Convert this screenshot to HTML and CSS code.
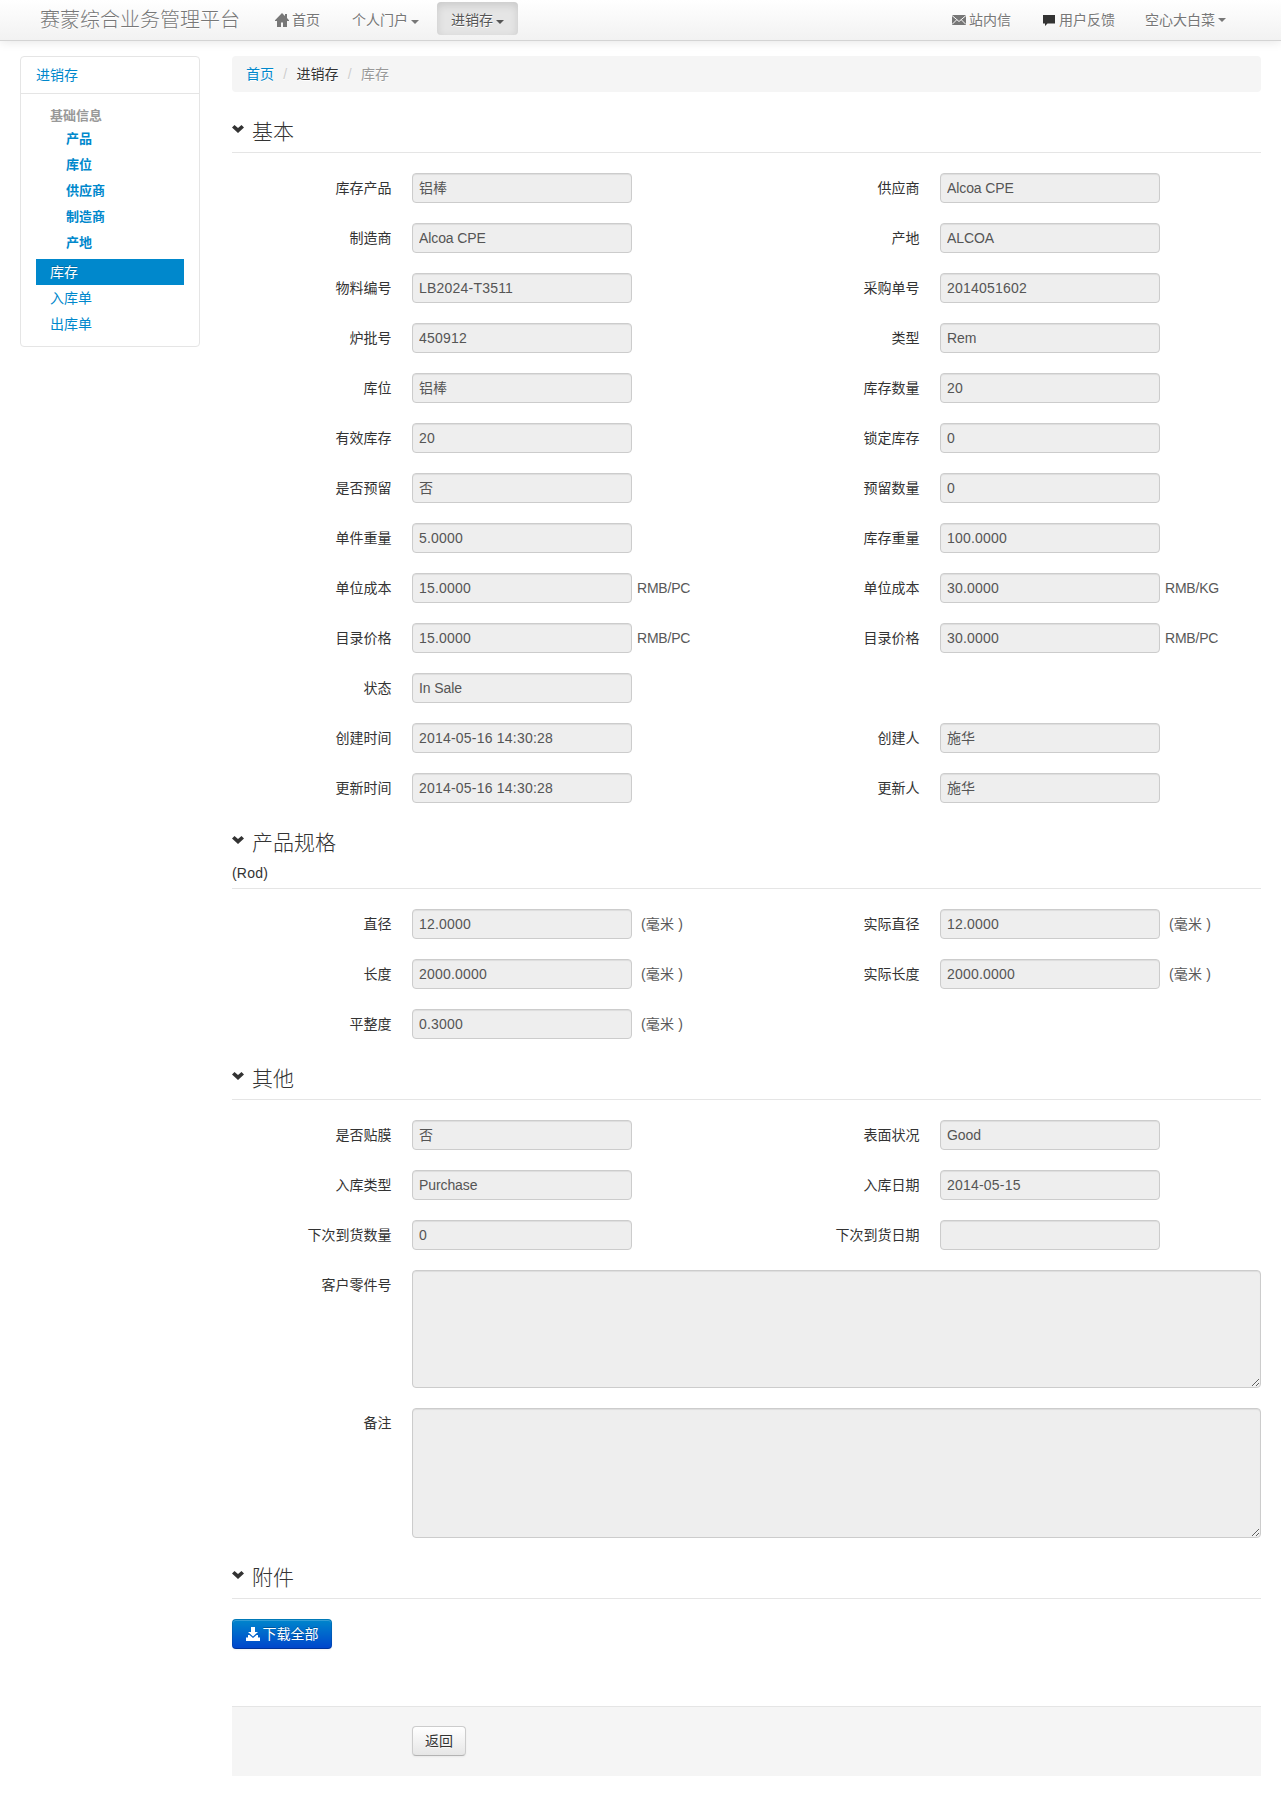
FILE: index.html
```html
<!DOCTYPE html>
<html lang="zh-CN">
<head>
<meta charset="utf-8">
<title>库存</title>
<link rel="stylesheet" href="styles.css">
</head>
<body>
<header class="navbar">
  <a class="brand">赛蒙综合业务管理平台</a>
  <nav class="nav">
    <a class="nav-link"><svg class="icon" viewBox="0 0 14 14"><path fill="#777" d="M7 0 0 7.200V8h2v6h4V9.500h2V14h4V8h2v-.8L12 5V1h-2v2z"/></svg><span>首页</span></a>
    <a class="nav-link"><span>个人门户</span><i class="caret"></i></a>
    <a class="nav-link active"><span>进销存</span><i class="caret"></i></a>
  </nav>
  <nav class="nav nav-right">
    <a class="nav-link mail"><svg class="icon" viewBox="0 0 14 14"><path fill="#777" d="M0 2h14v10H0z"/><path d="m0 2.500 7 6 7-6M0 11.500l4.700-4.700M14 11.500 9.300 6.800" fill="none" stroke="#fafafa"/></svg><span>站内信</span></a>
    <a class="nav-link feedback"><svg class="icon" viewBox="0 0 14 14"><path fill="#333" d="M1 2h12v8.500H5.500L3 13v-2.500H1z"/></svg><span>用户反馈</span></a>
    <a class="nav-link user"><span>空心大白菜</span><i class="caret"></i></a>
  </nav>
</header>
<div class="page">
  <aside class="sidebar">
    <div class="side-title">进销存</div>
    <ul class="side-list">
      <li class="group">基础信息</li>
      <li class="sub">产品</li>
      <li class="sub">库位</li>
      <li class="sub">供应商</li>
      <li class="sub">制造商</li>
      <li class="sub">产地</li>
      <li class="item current">库存</li>
      <li class="item">入库单</li>
      <li class="item">出库单</li>
    </ul>
  </aside>
  <main class="content">
    <div class="breadcrumb"><a>首页</a><i>/</i><span>进销存</span><i>/</i><em>库存</em></div>

    <section class="section">
      <div class="legend"><h2><svg class="chevron" viewBox="0 0 12 8"><path d="M2.500 0 0 2.500 6 8l6-5.500L9.500 0 6 3z"/></svg>基本</h2></div>
      <div class="fields">
        <div class="field"><label>库存产品</label><input class="cjk" readonly value="铝棒"></div>
        <div class="field"><label>供应商</label><input class="latin" readonly value="Alcoa CPE"></div>
        <div class="field"><label>制造商</label><input class="latin" readonly value="Alcoa CPE"></div>
        <div class="field"><label>产地</label><input class="latin" readonly value="ALCOA"></div>
        <div class="field"><label>物料编号</label><input readonly value="LB2024-T3511"></div>
        <div class="field"><label>采购单号</label><input readonly value="2014051602"></div>
        <div class="field"><label>炉批号</label><input readonly value="450912"></div>
        <div class="field"><label>类型</label><input class="latin" readonly value="Rem"></div>
        <div class="field"><label>库位</label><input class="cjk" readonly value="铝棒"></div>
        <div class="field"><label>库存数量</label><input readonly value="20"></div>
        <div class="field"><label>有效库存</label><input readonly value="20"></div>
        <div class="field"><label>锁定库存</label><input readonly value="0"></div>
        <div class="field"><label>是否预留</label><input class="cjk" readonly value="否"></div>
        <div class="field"><label>预留数量</label><input readonly value="0"></div>
        <div class="field"><label>单件重量</label><input readonly value="5.0000"></div>
        <div class="field"><label>库存重量</label><input readonly value="100.0000"></div>
        <div class="field"><label>单位成本</label><input readonly value="15.0000"><span class="suffix">RMB/PC</span></div>
        <div class="field"><label>单位成本</label><input readonly value="30.0000"><span class="suffix">RMB/KG</span></div>
        <div class="field"><label>目录价格</label><input readonly value="15.0000"><span class="suffix">RMB/PC</span></div>
        <div class="field"><label>目录价格</label><input readonly value="30.0000"><span class="suffix">RMB/PC</span></div>
        <div class="field single"><label>状态</label><input class="latin" readonly value="In Sale"></div>
        <div class="field"><label>创建时间</label><input readonly value="2014-05-16 14:30:28"></div>
        <div class="field"><label>创建人</label><input class="cjk" readonly value="施华"></div>
        <div class="field"><label>更新时间</label><input readonly value="2014-05-16 14:30:28"></div>
        <div class="field"><label>更新人</label><input class="cjk" readonly value="施华"></div>
      </div>
    </section>

    <section class="section">
      <div class="legend"><h2><svg class="chevron" viewBox="0 0 12 8"><path d="M2.500 0 0 2.500 6 8l6-5.500L9.500 0 6 3z"/></svg>产品规格</h2><p class="shape">(Rod)</p></div>
      <div class="fields">
        <div class="field"><label>直径</label><input readonly value="12.0000"><span class="suffix unit">(毫米 )</span></div>
        <div class="field"><label>实际直径</label><input readonly value="12.0000"><span class="suffix unit">(毫米 )</span></div>
        <div class="field"><label>长度</label><input readonly value="2000.0000"><span class="suffix unit">(毫米 )</span></div>
        <div class="field"><label>实际长度</label><input readonly value="2000.0000"><span class="suffix unit">(毫米 )</span></div>
        <div class="field"><label>平整度</label><input readonly value="0.3000"><span class="suffix unit">(毫米 )</span></div>
      </div>
    </section>

    <section class="section">
      <div class="legend"><h2><svg class="chevron" viewBox="0 0 12 8"><path d="M2.500 0 0 2.500 6 8l6-5.500L9.500 0 6 3z"/></svg>其他</h2></div>
      <div class="fields">
        <div class="field"><label>是否贴膜</label><input class="cjk" readonly value="否"></div>
        <div class="field"><label>表面状况</label><input class="latin" readonly value="Good"></div>
        <div class="field"><label>入库类型</label><input class="latin" readonly value="Purchase"></div>
        <div class="field"><label>入库日期</label><input readonly value="2014-05-15"></div>
        <div class="field"><label>下次到货数量</label><input readonly value="0"></div>
        <div class="field"><label>下次到货日期</label><input readonly value=""></div>
        <div class="field wide"><label>客户零件号</label><textarea class="part-no" readonly></textarea></div>
        <div class="field wide"><label>备注</label><textarea class="remark" readonly></textarea></div>
      </div>
    </section>

    <section class="section">
      <div class="legend"><h2><svg class="chevron" viewBox="0 0 12 8"><path d="M2.500 0 0 2.500 6 8l6-5.500L9.500 0 6 3z"/></svg>附件</h2></div>
      <button class="btn primary"><svg class="icon" viewBox="0 0 14 14"><path fill="#fff" d="M5 0h4v5h3L7 9.500 2 5h3zM2 8h1.500L7 11l3.500-3H12v2.500h2V14H0v-3.500h2z"/></svg><span>下载全部</span></button>
    </section>

    <div class="actions"><button class="btn">返回</button></div>
  </main>
</div>
</body>
</html>
```
FILE: styles.css
```css
* { box-sizing: border-box; }
body {
  margin: 0;
  min-height: 1813px;
  background: #fff;
  color: #333;
  font: 14px/20px "Liberation Sans", "Noto Sans CJK SC", sans-serif;
}
ul, h2, p { margin: 0; padding: 0; list-style: none; }

.navbar {
  display: flex;
  align-items: flex-start;
  height: 41px;
  padding: 0 40px;
  background: linear-gradient(#fff, #f2f2f2);
  border-bottom: 1px solid #d4d4d4;
  box-shadow: 0 1px 10px rgba(0, 0, 0, .1);
  color: #777;
  text-shadow: 0 1px 0 #fff;
}
.brand { width: 220px; font-size: 20px; font-weight: 300; line-height: 40px; white-space: nowrap; }
.nav { display: flex; padding-top: 2px; }
.nav-right { margin-left: auto; }
.nav-link { display: flex; align-items: center; height: 33px; padding: 3px 14px 0 15px; white-space: nowrap; }
.nav-link .icon { margin-right: 3px; }
.nav-link:nth-child(2) { padding: 3px 18px 0; }
.nav-link.active {
  padding: 3px 14px 0;
  background: #e5e5e5;
  border-radius: 4px;
  box-shadow: inset 0 3px 8px rgba(0, 0, 0, .125);
  color: #555;
}
.nav-right .mail { padding: 3px 15px 0; }
.nav-right .feedback { padding: 3px 15px 0 16px; }
.nav-right .user { padding: 3px 15px 0 15px; }
.icon { flex: none; width: 14px; height: 14px; }
.caret {
  width: 8px;
  margin: 3px 0 0 3px;
  border: 4px solid transparent;
  border-top-color: currentColor;
  border-bottom: 0;
}
.user .caret { margin-top: 0; }

.page { display: flex; gap: 32px; align-items: flex-start; padding: 15px 20px 0; }

.sidebar { width: 180px; height: 291px; border: 1px solid #e5e5e5; border-radius: 4px; }
.side-title { height: 37px; padding: 8px 15px; border-bottom: 1px solid #e5e5e5; color: #08c; }
.side-list { padding: 12px 15px 0; }
.side-list li { height: 26px; padding: 3px 14px; color: #08c; }
.side-list .group { height: 20px; padding-top: 0; color: #999; font-size: 13px; font-weight: 700; }
.side-list .sub { padding-left: 30px; font-size: 13px; font-weight: 700; }
.side-list .current { margin-top: 3px; background: #08c; color: #fff; text-shadow: 0 -1px 0 rgba(0, 0, 0, .2); }

.content { width: 1029px; }
.breadcrumb {
  display: flex;
  height: 36px;
  padding: 8px 14px;
  background: #f5f5f5;
  border-radius: 4px;
  text-shadow: 0 1px 0 #fff;
}
.breadcrumb a { color: #08c; }
.breadcrumb i { width: 22.500px; color: #ccc; font-style: normal; text-align: center; }
.breadcrumb em { color: #999; font-style: normal; }

.section { padding-top: 20px; }
.legend { margin-bottom: 20px; border-bottom: 1px solid #e5e5e5; }
.legend h2 { display: flex; align-items: flex-start; gap: 8px; height: 40px; font-size: 21px; font-weight: 300; line-height: 40px; }
.chevron { width: 12px; height: 8px; margin-top: 13px; fill: #333; }
.shape { height: 25px; letter-spacing: .2px; }

.fields { display: grid; grid-template-columns: 528px 501px; row-gap: 20px; }
.field { display: flex; align-items: flex-start; white-space: nowrap; }
.field label { flex: none; width: 159.500px; margin-right: 20.500px; line-height: 30px; text-align: right; }
.single, .wide { grid-column: 1 / -1; }
input, textarea {
  margin: 0;
  padding: 4px 6px;
  background: #eee;
  border: 1px solid #ccc;
  border-radius: 4px;
  box-shadow: inset 0 1px 1px rgba(0, 0, 0, .075);
  color: #555;
  font: inherit;
  letter-spacing: .21px;
}
input { width: 220px; height: 30px; }
input.latin { letter-spacing: -.1px; }
input.cjk { padding: 3px 6px 5px; letter-spacing: 0; }
textarea { display: block; width: 849px; }
.part-no { height: 118px; }
.remark { height: 130px; }
.suffix { margin-left: 5px; color: #595959; line-height: 30px; letter-spacing: -.2px; }
.suffix.unit { margin-left: 9px; letter-spacing: .2px; }

.btn {
  display: inline-flex;
  align-items: center;
  justify-content: center;
  width: 54px;
  height: 30px;
  margin: 0;
  padding: 0;
  background: linear-gradient(#fff, #e6e6e6);
  border: 1px solid #ccc;
  border-bottom-color: #b3b3b3;
  border-radius: 4px;
  box-shadow: inset 0 1px 0 rgba(255, 255, 255, .2), 0 1px 2px rgba(0, 0, 0, .05);
  color: #333;
  font: inherit;
  text-shadow: 0 1px 1px rgba(255, 255, 255, .75);
}
.btn.primary {
  display: flex;
  gap: 3px;
  width: 100px;
  background: linear-gradient(#08c, #04c) border-box;
  border-color: rgba(0, 0, 0, .1) rgba(0, 0, 0, .1) rgba(0, 0, 0, .25);
  color: #fff;
  text-shadow: 0 -1px 0 rgba(0, 0, 0, .25);
}
.actions { display: flex; height: 70px; margin-top: 57px; padding: 19px 0 0 180px; background: #f5f5f5; border-top: 1px solid #e5e5e5; }
```
